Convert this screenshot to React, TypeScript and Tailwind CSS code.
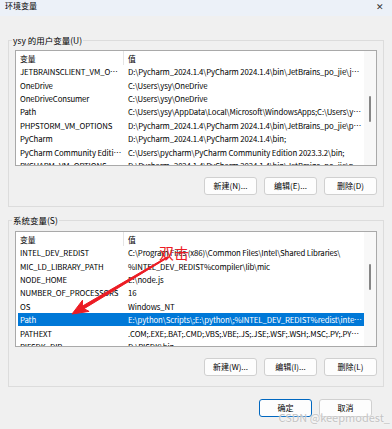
const userVars: [string, string][] = [
  ["JETBRAINSCLIENT_VM_OPTIONS", "D:\\Pycharm_2024.1.4\\PyCharm 2024.1.4\\bin\\JetBrains_po_jie\\jetbrains_client.vmoptions"],
  ["OneDrive", "C:\\Users\\ysy\\OneDrive"],
  ["OneDriveConsumer", "C:\\Users\\ysy\\OneDrive"],
  ["Path", "C:\\Users\\ysy\\AppData\\Local\\Microsoft\\WindowsApps;C:\\Users\\ysy\\AppData\\Roaming\\npm"],
  ["PHPSTORM_VM_OPTIONS", "D:\\Pycharm_2024.1.4\\PyCharm 2024.1.4\\bin\\JetBrains_po_jie\\phpstorm.vmoptions"],
  ["PyCharm", "D:\\Pycharm_2024.1.4\\PyCharm 2024.1.4\\bin;"],
  ["PyCharm Community Edition", "C:\\Users\\pycharm\\PyCharm Community Edition 2023.3.2\\bin;"],
  ["PYCHARM_VM_OPTIONS", "D:\\Pycharm_2024.1.4\\PyCharm 2024.1.4\\bin\\JetBrains_po_jie\\pycharm.vmoptions"],
];

const sysVars: [string, string][] = [
  ["INTEL_DEV_REDIST", "C:\\Program Files (x86)\\Common Files\\Intel\\Shared Libraries\\"],
  ["MIC_LD_LIBRARY_PATH", "%INTEL_DEV_REDIST%compiler\\lib\\mic"],
  ["NODE_HOME", "E:\\node.js"],
  ["NUMBER_OF_PROCESSORS", "16"],
  ["OS", "Windows_NT"],
  ["Path", "E:\\python\\Scripts\\;E:\\python\\;%INTEL_DEV_REDIST%redist\\intel64\\compiler;C:\\Windows\\system32"],
  ["PATHEXT", ".COM;.EXE;.BAT;.CMD;.VBS;.VBE;.JS;.JSE;.WSF;.WSH;.MSC;.PY;.PYW;.CPL"],
  ["PIFSDK_DIR", "D:\\PISDK\\bin"],
];

function VarTable({ rows, selected, thumbTop }: { rows: [string, string][]; selected?: number; thumbTop: string }) {
  return (
    <div className="w-[362px] h-[116px] border border-[#a9a9a9] bg-white flex">
      <div className="flex-1 flex flex-col overflow-hidden text-[7.8px] tracking-[-0.12px]">
        <div className="h-[14px] flex items-center shrink-0 leading-[13px]">
          <div className="w-[108px] h-full pl-[4px] flex items-center border-r border-[#e5e5e5]">变量</div>
          <div className="pl-[4px]">值</div>
        </div>
        {rows.map(([k, v], i) => (
          <div
            key={k + i}
            className={`h-[13.4px] shrink-0 ml-[2px] flex items-center leading-[13px] ${
              i === selected ? "bg-[#0078d7] text-white" : ""
            }`}
          >
            <div className="w-[106px] pl-[2px] pr-[2px] truncate">{k}</div>
            <div className="flex-1 min-w-0 pl-[4px] pr-[1px] truncate">{v}</div>
          </div>
        ))}
      </div>
      <div className="w-[12px] bg-[#f8f8f8] flex justify-center">
        <div className={`w-[2px] h-[26px] rounded-full bg-[#868686] ${thumbTop}`} />
      </div>
    </div>
  );
}

function Btn({ label, primary }: { label: string; primary?: boolean }) {
  return (
    <button
      className={`h-[18px] w-[53px] rounded-[3px] bg-[#fdfdfd] flex items-center justify-center text-[8px] ${
        primary ? "border border-[#0067c0]" : "border border-[#d0d0d0]"
      }`}
    >
      {label}
    </button>
  );
}

export default function App() {
  return (
    <div
      className="relative w-[392px] h-[429px] bg-[#f0f0f0] overflow-hidden text-[8.5px] text-black leading-none"
      style={{ fontFamily: '"Noto Sans CJK SC", "Noto Sans", sans-serif' }}
    >
      <div className="h-[16px] bg-[#ecf1f8] flex items-start justify-between pl-[5px] pr-[8px] pt-[2px]">
        <span className="text-[8px]">环境变量</span>
        <span className="text-[9px] text-[#333]">✕</span>
      </div>

      <div className="px-[8px]">
        <fieldset className="mt-[17px] border border-[#dcdcdc] px-[6px] pb-[11px]">
          <legend className="-ml-[3px] px-[1px] leading-[14px]">ysy 的用户变量(U)</legend>
          <div className="mt-[3px]">
            <VarTable rows={userVars} thumbTop="mt-[45px]" />
          </div>
          <div className="mt-[11px] flex justify-end gap-[7px]">
            <Btn label="新建(N)..." />
            <Btn label="编辑(E)..." />
            <Btn label="删除(D)" />
          </div>
        </fieldset>

        <fieldset className="mt-[6px] border border-[#dcdcdc] px-[6px] pb-[10px]">
          <legend className="-ml-[3px] px-[1px] leading-[14px]">系统变量(S)</legend>
          <div className="mt-[4px]">
            <VarTable rows={sysVars} selected={5} thumbTop="mt-[32px]" />
          </div>
          <div className="mt-[11px] flex justify-end gap-[7px]">
            <Btn label="新建(W)..." />
            <Btn label="编辑(I)..." />
            <Btn label="删除(L)" />
          </div>
        </fieldset>
      </div>

      <div className="mt-[12px] pr-[20px] flex justify-end gap-[7px]">
        <Btn label="确定" primary />
        <Btn label="取消" />
      </div>

      {/* red annotation drawn over the list */}
      <svg className="absolute inset-0 pointer-events-none" width="392" height="429">
        <polygon
          points="168.3,257.4 84,308.7 89.1,311.4 72,314 82.5,300.2 82.4,306.1 167.7,256.6"
          fill="#ec1c24"
          stroke="#ec1c24"
          strokeWidth="1"
          strokeLinejoin="round"
        />
      </svg>
      <span className="absolute left-[159px] top-[245px] text-[15px] text-[#ec1c24]">双击</span>
      <span
        className="absolute right-[2px] bottom-[6px] text-[11px] text-[#c4c4c4]"
        style={{ textShadow: "0 0 2px #fff" }}
      >
        CSDN @keepmodest_
      </span>
    </div>
  );
}
